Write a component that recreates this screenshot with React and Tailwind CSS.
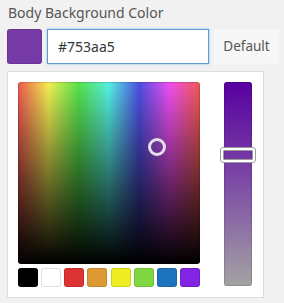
import React from 'react';

const swatches = ['#000000', '#ffffff', '#dd3333', '#dd9933', '#eeee22', '#81d742', '#1e73be', '#8224e3'];

const App = () => {
  return (
    <div className="w-[284px] h-[303px] bg-[#f1f1f1] pl-[7px] pt-[3px] font-['Noto_Sans',sans-serif] overflow-hidden">
      <div className="text-[14px] leading-[20px] text-[#555] pl-[1px] h-[26px]">Body Background Color</div>

      <div className="flex items-center gap-[5px]">
        <div className="w-[35px] h-[35px] rounded-[3px] bg-[#753aa5] shadow-[inset_0_0_0_1px_rgba(0,0,0,0.1)]" />
        <div className="w-[162px] h-[35px] bg-white border border-[#5b9dd9] shadow-[0_0_2px_rgba(30,140,190,0.5)] flex items-center pl-[10px] text-[14px] text-[#32373c]">
          #753aa5
        </div>
        <div className="w-[65px] h-[35px] bg-[#f7f7f7] rounded-[3px] flex items-center justify-center text-[13.5px] text-[#555]">
          Default
        </div>
      </div>

      <div className="mt-[7px] w-[257px] bg-white border border-[#dddddd] p-[10px] flex justify-between">
        <div className="w-[182px]">
          <div className="relative w-[182px] h-[182px] rounded-[3px] bg-[linear-gradient(to_bottom,rgba(0,0,0,0),#000),linear-gradient(to_right,#f25a52,#f5f053,#55e34c,#55f2e6,#4f4fe3,#f04ff2,#f25a52)] shadow-[inset_0_0_2px_rgba(0,0,0,0.5)]">
            <div className="absolute left-[130px] top-[56px] w-[18px] h-[18px] rounded-full border-[3px] border-[#e2dfea]" />
          </div>
          <div className="mt-[4px] flex justify-between">
            {swatches.map((c) => (
              <div
                key={c}
                className="w-[20px] h-[19px] rounded-[3px] shadow-[inset_0_0_0_1px_rgba(0,0,0,0.12)]"
                style={{ backgroundColor: c }}
              />
            ))}
          </div>
        </div>
        <div className="relative w-[28px] h-[204px] mr-[1px] rounded-[3px] bg-[linear-gradient(to_bottom,#57009f,#7a44a6_45%,#a3a3a3)] shadow-[inset_0_0_2px_rgba(0,0,0,0.4)]">
          <div className="absolute left-[-3px] top-[66px] w-[34px] h-[14px] rounded-[3px] border-2 border-white shadow-[0_0_0_1px_#999,inset_0_0_0_1px_#999]" />
        </div>
      </div>
    </div>
  );
};

export default App;
